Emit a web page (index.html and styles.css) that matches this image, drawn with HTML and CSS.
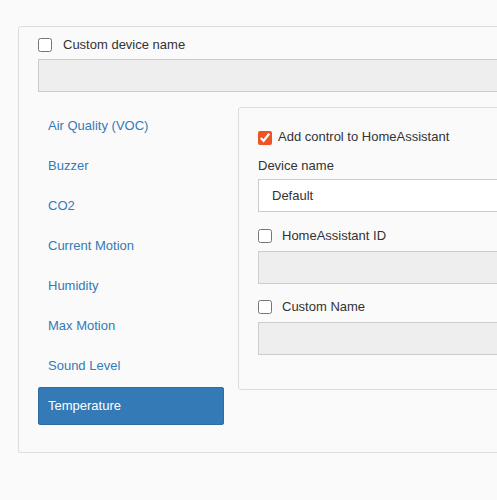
FILE: index.html
```html
<!DOCTYPE html>
<html>
<head>
<meta charset="utf-8">
<link rel="stylesheet" href="styles.css">
</head>
<body>
<div class="page">
  <div class="panel">
    <label class="check-row top-check">
      <input type="checkbox" class="cb">
      <span class="cb-label">Custom device name</span>
    </label>
    <div class="field disabled top-field"></div>
    <div class="body">
      <ul class="nav">
        <li><a>Air Quality (VOC)</a></li>
        <li><a>Buzzer</a></li>
        <li><a>CO2</a></li>
        <li><a>Current Motion</a></li>
        <li><a>Humidity</a></li>
        <li><a>Max Motion</a></li>
        <li><a>Sound Level</a></li>
        <li class="active"><a>Temperature</a></li>
      </ul>
      <div class="detail">
        <label class="check-row">
          <input type="checkbox" class="cb orange" checked>
          <span class="cb-label tight">Add control to HomeAssistant</span>
        </label>
        <div class="field-label">Device name</div>
        <div class="field select">Default</div>
        <label class="check-row gap-top first-gap">
          <input type="checkbox" class="cb">
          <span class="cb-label narrow">HomeAssistant ID</span>
        </label>
        <div class="field disabled after-check"></div>
        <label class="check-row gap-top">
          <input type="checkbox" class="cb">
          <span class="cb-label narrow">Custom Name</span>
        </label>
        <div class="field disabled after-check"></div>
      </div>
    </div>
  </div>
</div>
</body>
</html>
```
FILE: styles.css
```css
html, body {
  margin: 0;
  padding: 0;
  overflow: hidden;
  background: #fafafa;
}
body {
  font-family: "Liberation Sans", Arial, sans-serif;
  font-size: 13px;
  color: #333;
}
.page {
  padding: 26px 0 0 18px;
}
.panel {
  width: 700px;
  border: 1px solid #dddddd;
  border-radius: 3px;
  background: #fafafa;
  box-shadow: 0 1px 1px rgba(0,0,0,0.06);
  padding: 11px 19px 27px 19px;
}
.check-row {
  display: flex;
  align-items: center;
  height: 14px;
}
.cb {
  margin: 0;
  width: 14px;
  height: 14px;
  flex: none;
}
.cb.orange {
  accent-color: #ef5322;
}
.cb-label {
  margin-left: 11px;
  line-height: 20px;
}
.cb-label.tight {
  margin-left: 6px;
  position: relative;
  top: -1px;
}
.cb-label.narrow {
  margin-left: 10px;
}
.field {
  height: 33px;
  box-sizing: border-box;
  border: 1px solid #cccccc;
  margin-right: -100px;
}
.field.disabled {
  background: #eeeeee;
}
.top-field {
  margin-top: 7px;
  margin-right: 0;
}
.body {
  display: flex;
  align-items: flex-start;
  gap: 14px;
  margin-top: 15px;
}
.nav {
  list-style: none;
  margin: 0;
  padding: 0;
  width: 186px;
  flex: none;
}
.nav li + li {
  margin-top: 2px;
}
.nav a {
  display: block;
  padding: 9px 10px;
  line-height: 20px;
  color: #337ab7;
  border-radius: 3px;
}
.nav li.active a {
  background: #337ab7;
  box-shadow: inset 0 0 0 1px #2e6da4;
  color: #fff;
}
.detail {
  flex: 1;
  border: 1px solid #dddddd;
  border-radius: 3px;
  background: #fafafa;
  padding: 23px 19px 34px 19px;
}
.field-label {
  margin-top: 11px;
  line-height: 20px;
}
.field.select {
  margin-top: 3px;
  background: #ffffff;
  padding-left: 13px;
  line-height: 31px;
}
.gap-top {
  margin-top: 16px;
}
.gap-top.first-gap {
  margin-top: 17px;
}
.after-check {
  margin-top: 8px;
}
```
